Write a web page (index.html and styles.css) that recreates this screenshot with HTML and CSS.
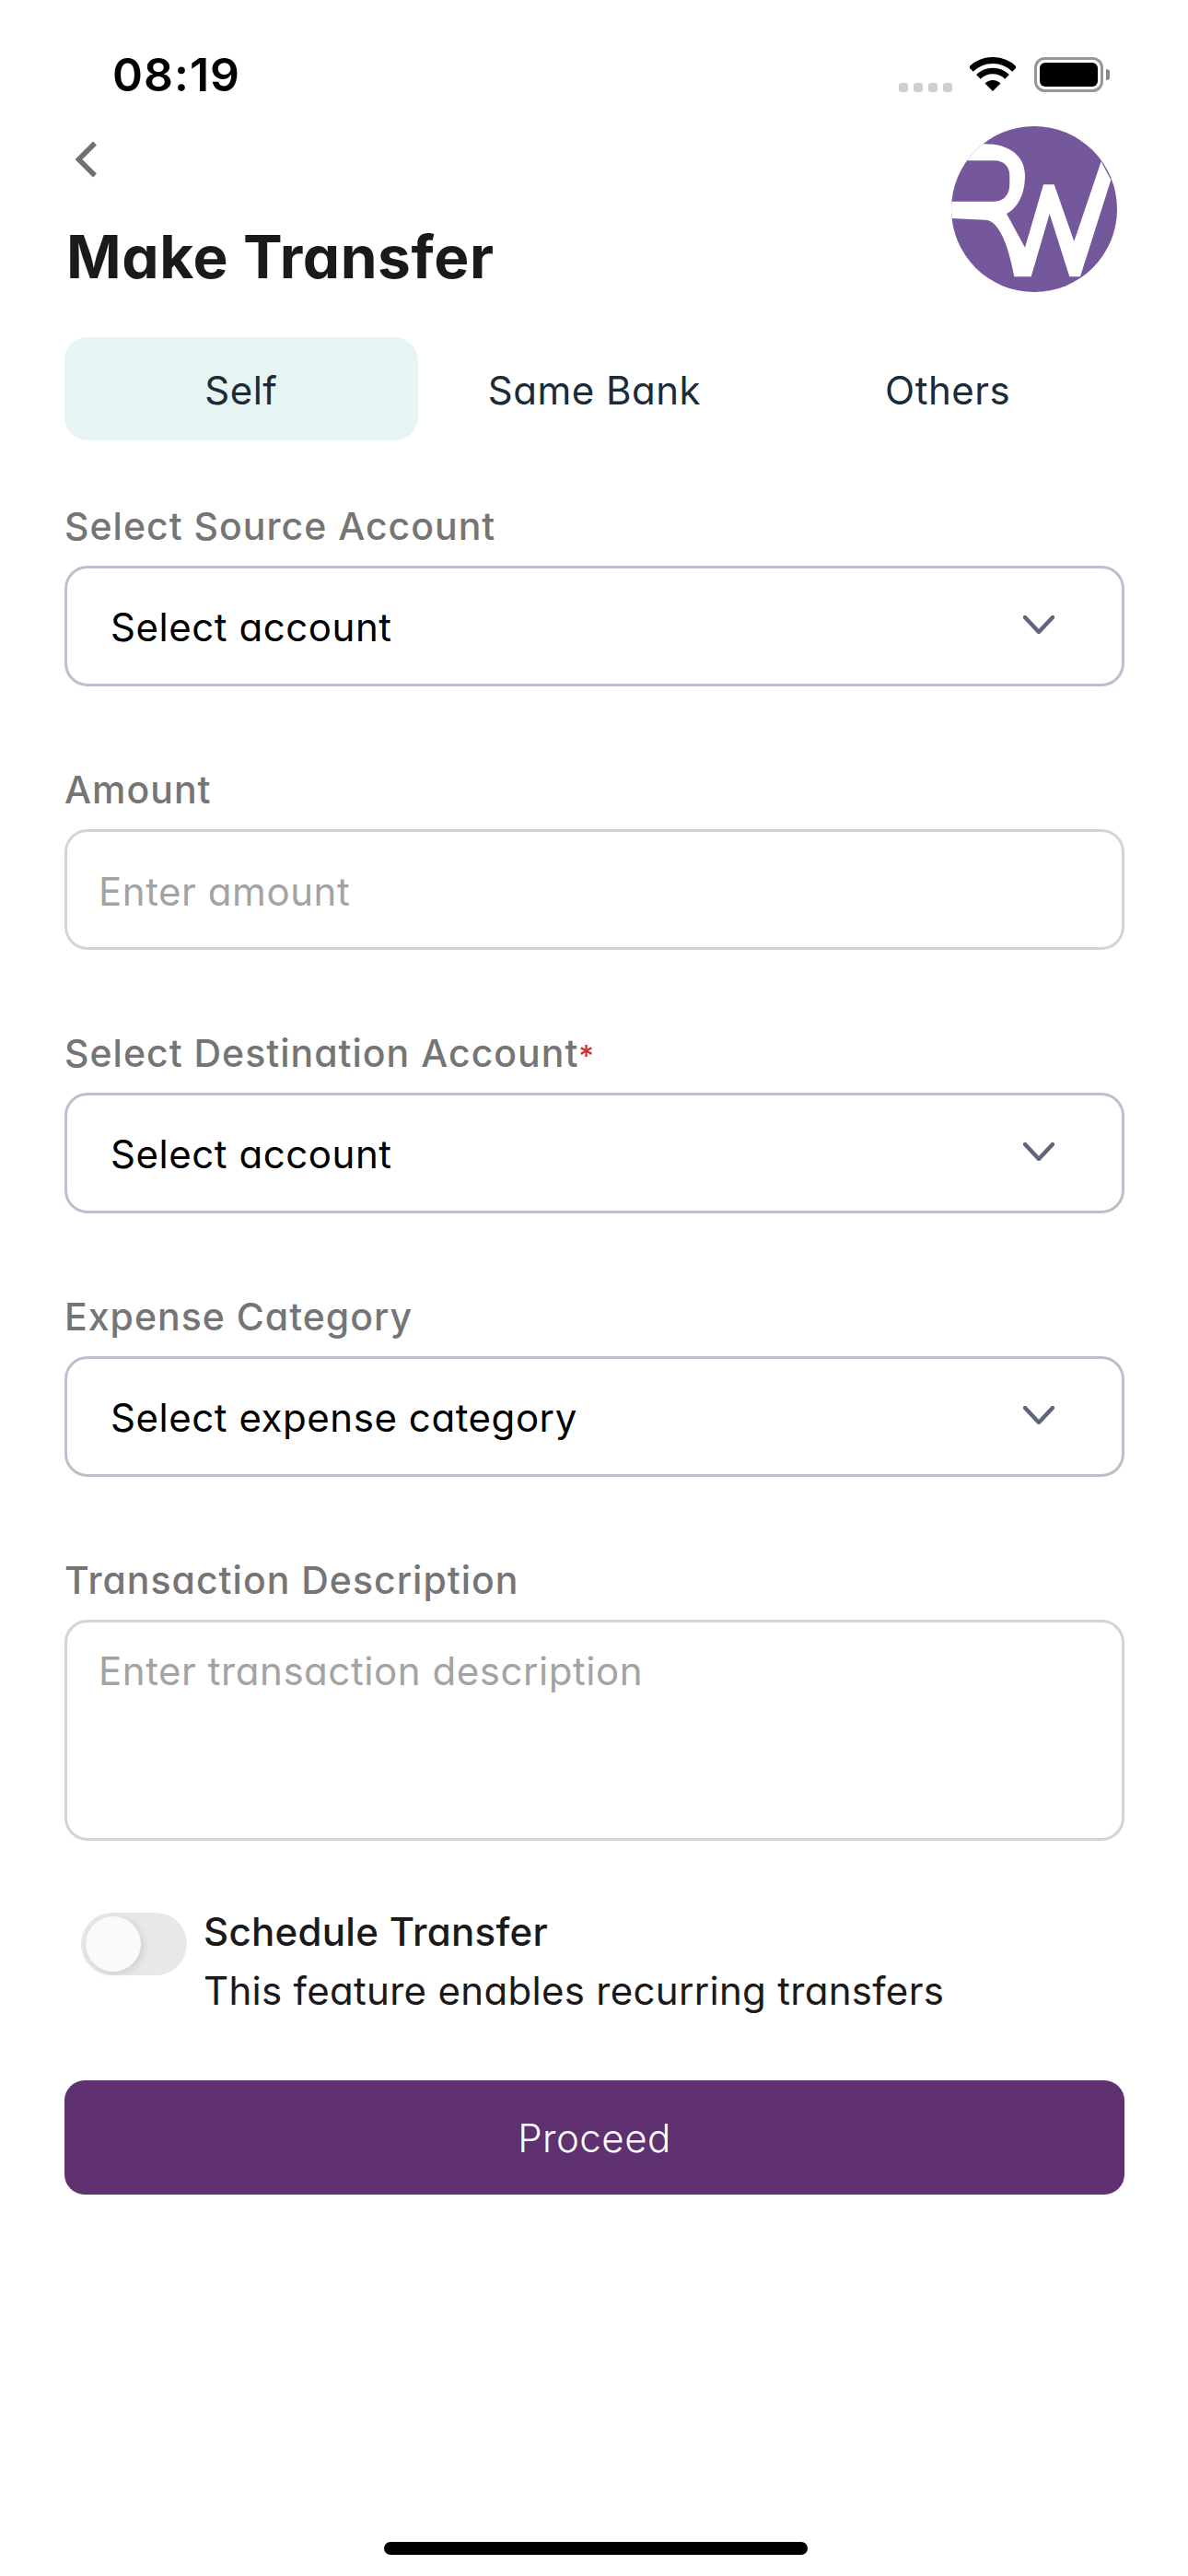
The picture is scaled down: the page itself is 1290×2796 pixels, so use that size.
FILE: index.html
```html
<!DOCTYPE html>
<html lang="en">
<head>
<meta charset="utf-8">
<title>Make Transfer</title>
<link rel="stylesheet" href="styles.css">
</head>
<body>
<main class="screen">
  <div class="status">
    <span class="time">08:19</span>
    <div class="status-icons">
      <div class="dots"><i></i><i></i><i></i><i></i></div>
      <svg class="wifi" viewBox="0 0 50 37" aria-hidden="true"><path d="M1.3 13.3A33.5 33.5 0 0 1 48.7 13.3" fill="none" stroke="#000" stroke-width="7"/><path d="M9.4 21.4A22 22 0 0 1 40.6 21.4" fill="none" stroke="#000" stroke-width="6.5"/><path d="M25 37L16.5 28.5A12 12 0 0 1 33.5 28.5Z"/></svg>
      <svg class="battery" viewBox="0 0 82 38" aria-hidden="true"><rect x="1.5" y="1.5" width="72" height="35" rx="10" fill="none" stroke="#979797" stroke-width="3"/><rect x="6" y="6" width="63" height="26" rx="6"/><path d="M78 13A6 6 0 0 1 78 25Z" fill="#8a8a8a"/></svg>
    </div>
  </div>
  <header class="head">
    <div class="head-left">
      <svg class="back" viewBox="0 0 23 40" aria-hidden="true"><path d="M21 2.5L3.5 20L21 37.5" fill="none" stroke="#707070" stroke-width="5.5"/></svg>
      <h1 class="title">Make Transfer</h1>
    </div>
    <svg class="logo" viewBox="0 0 180 180" aria-hidden="true">
      <defs><clipPath id="disc"><circle cx="90" cy="90" r="90"/></clipPath></defs>
      <circle cx="90" cy="90" r="90" fill="#74589b"/>
      <path clip-path="url(#disc)" fill="#fff" d="M36.7 19.3C62 19 80 32 80 53.3C80 74 72 89 60 95L80 131.7L100 63.3H111.7L133.3 125L162.7 38.3L173.3 58.3L140 163.3H128.3L106.7 95L86.7 163.3H68.3C62 130 52 102 36.7 101.7L0 100V81.7H46.7C57 81.7 63.3 74 63.3 63.3V53.3C63.3 44 57 37.3 46.7 37.3H-5V19.3Z"/>
    </svg>
  </header>
  <nav class="tabs">
    <span class="tab tab-active">Self</span>
    <span class="tab">Same Bank</span>
    <span class="tab">Others</span>
  </nav>
  <form class="form">
    <div class="field">
      <span class="label">Select Source Account</span>
      <div class="box box-select"><span>Select account</span><svg class="chev" viewBox="0 0 34 20" aria-hidden="true"><path d="M2 2L17 18L32 2"/></svg></div>
    </div>
    <div class="field">
      <span class="label">Amount</span>
      <div class="box box-input"><span class="ph">Enter amount</span></div>
    </div>
    <div class="field">
      <span class="label">Select Destination Account<em class="req">*</em></span>
      <div class="box box-select"><span>Select account</span><svg class="chev" viewBox="0 0 34 20" aria-hidden="true"><path d="M2 2L17 18L32 2"/></svg></div>
    </div>
    <div class="field">
      <span class="label">Expense Category</span>
      <div class="box box-select"><span>Select expense category</span><svg class="chev" viewBox="0 0 34 20" aria-hidden="true"><path d="M2 2L17 18L32 2"/></svg></div>
    </div>
    <div class="field field-last">
      <span class="label">Transaction Description</span>
      <div class="box box-area"><span class="ph">Enter transaction description</span></div>
    </div>
    <div class="schedule">
      <div class="toggle"><div class="thumb"></div></div>
      <div class="schedule-text">
        <span class="schedule-title">Schedule Transfer</span>
        <span class="schedule-sub">This feature enables recurring transfers</span>
      </div>
    </div>
    <div class="proceed">Proceed</div>
  </form>
  <div class="home"></div>
</main>
</body>
</html>
```
FILE: styles.css
```css
* { box-sizing: border-box; }
html, body { margin: 0; padding: 0; background: #fff; }
.screen {
  width: 1290px;
  height: 2796px;
  display: flex;
  flex-direction: column;
  position: relative;
  font-family: Inter, "Noto Sans", sans-serif;
  font-feature-settings: "cv11", "ss03";
  color: #000;
  overflow: hidden;
}
.status {
  height: 137px;
  padding: 62px 85px 0 122px;
  display: flex;
  justify-content: space-between;
  align-items: flex-start;
}
.time { font-size: 50px; font-weight: 600; line-height: 38px; letter-spacing: 1px; }
.status-icons { display: flex; align-items: flex-start; }
.dots { display: flex; gap: 6px; margin-top: 28px; margin-right: 19px; }
.dots i { width: 10px; height: 10px; border-radius: 3px; background: #cfcfcf; }
.wifi { width: 50px; height: 37px; margin-right: 20px; }
.battery { width: 82px; height: 38px; }
.head {
  display: flex;
  justify-content: space-between;
  padding: 0 77px 0 72px;
  height: 229px;
}
.head-left { display: flex; flex-direction: column; }
.back { width: 23px; height: 40px; margin: 16px 0 0 10px; display: block; }
.title { margin: 51px 0 0; font-size: 64px; line-height: 70px; font-weight: 700; color: #1a1a1a; letter-spacing: .6px; }
.logo { width: 180px; height: 180px; }
.tabs { display: grid; grid-template-columns: repeat(3, 1fr); margin: 0 69px 0 70px; height: 112px; }
.tab { display: flex; align-items: center; justify-content: center; padding-top: 2px; font-size: 42px; letter-spacing: .5px; color: #1b2b38; border-radius: 25px; }
.tab-active { background: #e6f4f3; }
.form { display: flex; flex-direction: column; padding: 0 69px 0 70px; margin-top: 69px; }
.field { display: flex; flex-direction: column; margin-bottom: 88px; }
.field-last { margin-bottom: 75px; }
.label { font-size: 41px; line-height: 48px; font-weight: 500; letter-spacing: 1px; color: #757575; margin-bottom: 19px; }
.req { color: #d32f2f; font-style: normal; font-size: 32px; line-height: 0; }
.box { border: 3px solid #bdc0cc; border-radius: 25px; height: 131px; display: flex; align-items: center; font-size: 42px; letter-spacing: .55px; }
.box-select { justify-content: space-between; padding: 2px 73px 0 47px; }
.box-input { padding: 4px 34px 0; border-color: #d4d4d6; }
.box-area { height: 240px; padding: 27px 34px; align-items: flex-start; border-color: #d4d4d6; }
.ph { color: #a3a3a3; }
.chev { width: 34px; height: 20px; margin-top: -5px; }
.chev path { fill: none; stroke: #5e6679; stroke-width: 4.4; stroke-linecap: round; stroke-linejoin: round; }
.schedule { display: flex; align-items: flex-start; padding-left: 18px; }
.toggle { width: 115px; height: 68px; border-radius: 34px; background: #e8e8ea; padding: 4px 5px; margin: 3px 18px 0 0; flex: none; }
.thumb { width: 60px; height: 60px; border-radius: 50%; background: #fafafa; box-shadow: 2px 2px 8px rgba(0,0,0,.12); }
.schedule-text { display: flex; flex-direction: column; gap: 16px; }
.schedule-title { font-size: 42px; line-height: 48px; font-weight: 500; letter-spacing: .3px; color: #1a1a1a; }
.schedule-sub { font-size: 42px; line-height: 48px; letter-spacing: .3px; color: #1a1a1a; }
.proceed { margin-top: 73px; height: 124px; border-radius: 22px; background: #5f3170; color: #fff; display: flex; align-items: center; justify-content: center; font-size: 42px; font-weight: 300; letter-spacing: .5px; }
.home { position: absolute; left: 417px; bottom: 23px; width: 460px; height: 14px; border-radius: 7px; background: #000; }
```
